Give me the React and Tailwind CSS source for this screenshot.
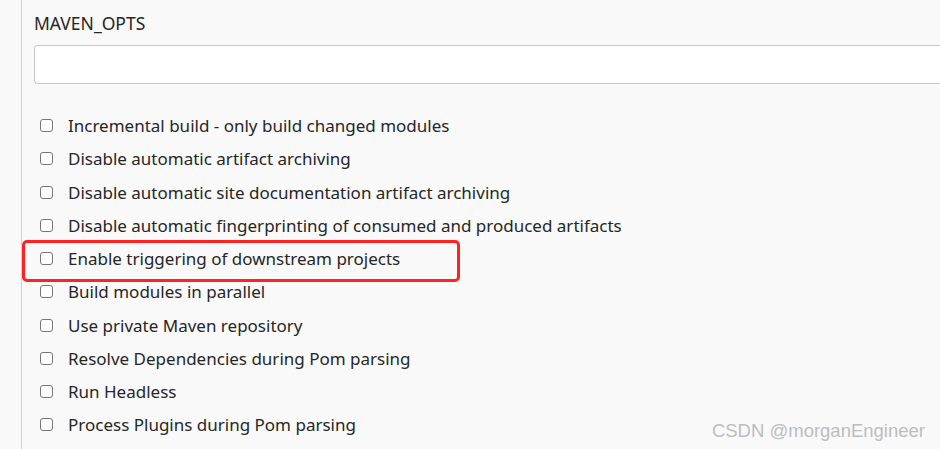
const OPTIONS = [
  "Incremental build - only build changed modules",
  "Disable automatic artifact archiving",
  "Disable automatic site documentation artifact archiving",
  "Disable automatic fingerprinting of consumed and produced artifacts",
  "Enable triggering of downstream projects",
  "Build modules in parallel",
  "Use private Maven repository",
  "Resolve Dependencies during Pom parsing",
  "Run Headless",
  "Process Plugins during Pom parsing",
  "",
];

function Option({ label }) {
  return (
    <label className="flex h-[33.25px] items-center gap-[15px] pl-[6px]">
      <span className="block h-[13px] w-[13px] shrink-0 rounded-[3px] border border-[#767676] bg-white" />
      <span className="text-[17px] leading-none text-[#262626]">{label}</span>
    </label>
  );
}

export default function App() {
  return (
    <div
      className="relative h-[449px] w-[940px] overflow-hidden bg-[#f9f9f9]"
      style={{ fontFamily: '"Noto Sans", "Open Sans", sans-serif' }}
    >
      <div className="ml-[21px] h-full border-l border-[#d0d0d0] pl-[12px] pt-[10px]">
        <div className="text-[17.5px] leading-[26px] text-[#262626]">MAVEN_OPTS</div>
        <div className="mt-[9px] h-[39px] rounded-l-[4px] border border-r-0 border-[#c8c8c8] bg-white" />
        <div className="pt-[25px]">
          {OPTIONS.map((o, i) => (
            <Option key={i} label={o} />
          ))}
        </div>
      </div>

      <div className="pointer-events-none absolute left-[22px] top-[240px] h-[42px] w-[438px] rounded-[5px] border-[3px] border-[#f22]" />

      <div
        className="absolute right-[15px] top-[417px] text-[18.5px] text-[#bdbdbd]"
        style={{ fontFamily: '"Liberation Sans", sans-serif' }}
      >
        CSDN @morganEngineer
      </div>
    </div>
  );
}
